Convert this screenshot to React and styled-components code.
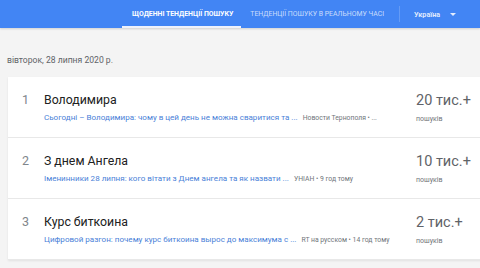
import React from "react";
import styled, { createGlobalStyle } from "styled-components";

const GlobalStyle = createGlobalStyle`
  html, body {
    margin: 0;
    padding: 0;
    background: #f4f4f4;
    font-family: Roboto, "Noto Sans", Arial, sans-serif;
    overflow: hidden;
  }
`;

const trends = [
  {
    rank: 1,
    title: "Володимира",
    snippet: "Сьогодні – Володимира: чому в цей день не можна сваритися та ...",
    source: "Новости Тернополя • ...",
    count: "20 тис.+",
  },
  {
    rank: 2,
    title: "З днем Ангела",
    snippet: "Іменинники 28 липня: кого вітати з Днем ангела та як назвати ...",
    source: "УНІАН • 9 год тому",
    count: "10 тис.+",
  },
  {
    rank: 3,
    title: "Курс биткоина",
    snippet: "Цифровой разгон: почему курс биткоина вырос до максимума с ...",
    source: "RT на русском • 14 год тому",
    count: "2 тис.+",
  },
];

const App = () => {
  return (
    <Page>
      <GlobalStyle />
      <Header>
        <Tabs>
          <Tab active>ЩОДЕННІ ТЕНДЕНЦІЇ ПОШУКУ</Tab>
          <Tab>ТЕНДЕНЦІЇ ПОШУКУ В РЕАЛЬНОМУ ЧАСІ</Tab>
        </Tabs>
        <Divider />
        <Region>
          Україна
          <Caret />
        </Region>
      </Header>
      <DateLabel>вівторок, 28 липня 2020 р.</DateLabel>
      <Card>
        {trends.map((item) => (
          <Row key={item.rank}>
            <Rank>{item.rank}</Rank>
            <Details>
              <Title>{item.title}</Title>
              <Meta>
                <Snippet>{item.snippet}</Snippet>
                <Source>{item.source}</Source>
              </Meta>
            </Details>
            <Stats>
              <Count>{item.count}</Count>
              <CountLabel>пошуків</CountLabel>
            </Stats>
          </Row>
        ))}
      </Card>
    </Page>
  );
};

const Page = styled.div`
  width: 480px;
  height: 268px;
  overflow: hidden;
`;

const Header = styled.header`
  height: 28px;
  background: #4285f4;
  display: flex;
  align-items: stretch;
  padding-left: 122px;
  box-shadow: 0 1px 2px rgba(0, 0, 0, 0.15);
`;

const Tabs = styled.nav`
  display: flex;
  align-items: stretch;
`;

const Tab = styled.div`
  position: relative;
  display: flex;
  align-items: center;
  padding: ${(p) => (p.active ? "0 8px 0 10px" : "0 10px 0 9px")};
  font-size: ${(p) => (p.active ? "6.9px" : "6.9px")};
  font-weight: ${(p) => (p.active ? 700 : 400)};
  color: ${(p) => (p.active ? "#ffffff" : "rgba(255,255,255,0.72)")};
  white-space: nowrap;
  &::after {
    content: "";
    display: ${(p) => (p.active ? "block" : "none")};
    position: absolute;
    left: 0;
    right: 0;
    bottom: 0;
    height: 2px;
    background: #eef2fb;
  }
`;

const Divider = styled.div`
  width: 1px;
  height: 16px;
  align-self: center;
  margin-left: 5px;
  background: rgba(255, 255, 255, 0.18);
`;

const Region = styled.div`
  display: flex;
  align-items: center;
  gap: 10px;
  margin-left: 14px;
  font-size: 7.2px;
  font-weight: 700;
  color: rgba(255, 255, 255, 0.85);
`;

const Caret = styled.span`
  width: 0;
  height: 0;
  border-left: 3px solid transparent;
  border-right: 3px solid transparent;
  border-top: 3px solid rgba(255, 255, 255, 0.85);
`;

const DateLabel = styled.div`
  padding: 27px 0 0 7px;
  height: 22px;
  font-size: 8.6px;
  color: #5f6368;
`;

const Card = styled.section`
  margin-left: 8px;
  width: 490px;
  background: #ffffff;
  box-shadow: 0 1px 2px rgba(0, 0, 0, 0.08);
`;

const Row = styled.div`
  height: 60px;
  display: flex;
  align-items: center;
  border-bottom: 1px solid #e8e8e8;
`;

const Rank = styled.div`
  width: 22px;
  padding-left: 14px;
  font-size: 12.5px;
  color: #80868b;
  margin-top: -15px;
`;

const Details = styled.div`
  width: 372px;
  display: flex;
  flex-direction: column;
  gap: 5px;
`;

const Title = styled.div`
  font-size: 12.3px;
  color: #212121;
`;

const Meta = styled.div`
  display: flex;
  align-items: baseline;
  gap: 5px;
  white-space: nowrap;
  margin-top: 1px;
`;

const Snippet = styled.span`
  font-size: 8.05px;
  color: #4a7fd8;
`;

const Source = styled.span`
  font-size: 6.8px;
  color: #70757a;
`;

const Stats = styled.div`
  display: flex;
  flex-direction: column;
  gap: 6px;
  margin-top: 1px;
`;

const Count = styled.div`
  font-size: 14.5px;
  color: #5f6368;
`;

const CountLabel = styled.div`
  font-size: 7px;
  color: #70757a;
`;

export default App;
